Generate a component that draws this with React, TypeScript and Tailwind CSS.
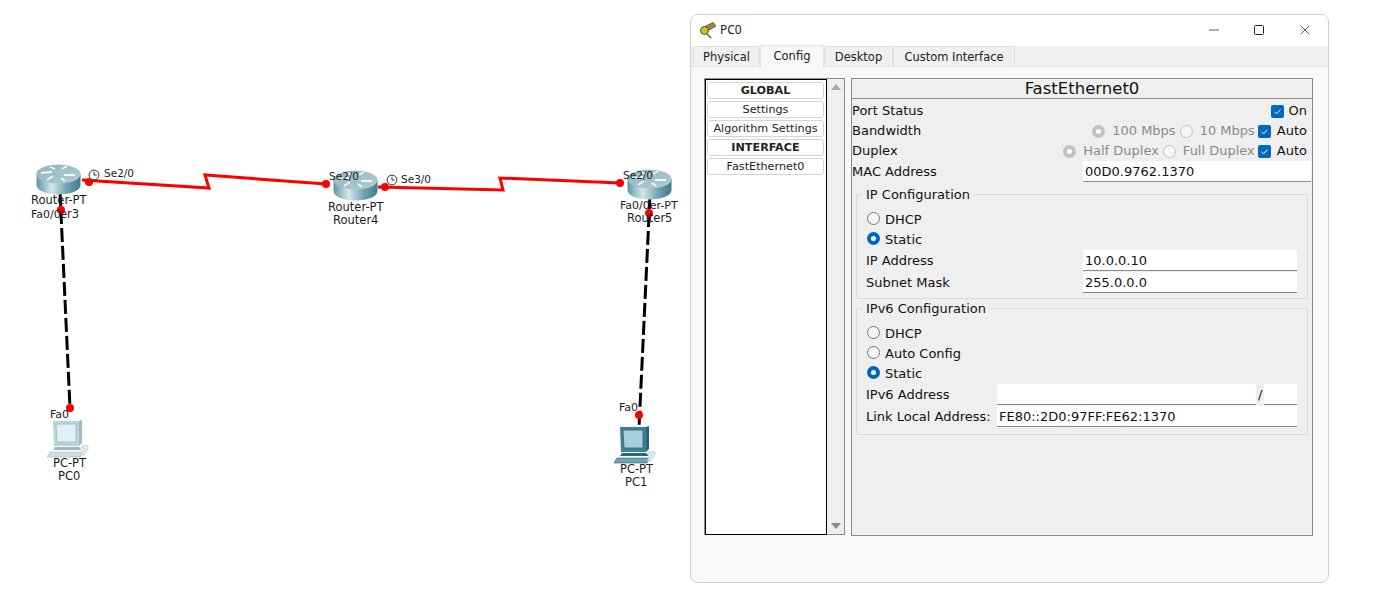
import { Minus, X } from 'lucide-react'

const font = "font-['DejaVu_Sans',sans-serif]"

function RouterIcon({ className }: { className: string }) {
  return (
    <svg viewBox="0 0 45 31" className={className}>
      <defs>
        <linearGradient id="routerSide" x1="0" x2="1" y1="0" y2="0">
          <stop offset="0" stopColor="#5d97a8" />
          <stop offset="0.35" stopColor="#d5e6ea" />
          <stop offset="0.7" stopColor="#6fa3b2" />
          <stop offset="1" stopColor="#3d7b8e" />
        </linearGradient>
        <linearGradient id="routerTop" x1="0" x2="1" y1="0" y2="1">
          <stop offset="0" stopColor="#8fb5c0" />
          <stop offset="1" stopColor="#b5ccd3" />
        </linearGradient>
      </defs>
      <path d="M0.5 10 V21 C0.5 26.5 10 30.5 22.5 30.5 S44.5 26.5 44.5 21 V10 Z" fill="url(#routerSide)" />
      <ellipse cx="22.5" cy="10" rx="22" ry="9.5" fill="url(#routerTop)" />
      <path d="M5 9 L16 8 M19 5 L14 3 M26 5 L31 2 M28 11 L39 11 M17 12 L11 16 M25 14 L29 17" stroke="#eef6f8" strokeWidth="1.8" fill="none" />
    </svg>
  )
}

function PcIcon({ className, dark }: { className: string; dark?: boolean }) {
  const body = dark ? '#3f8096' : '#b9d3db'
  const shade = dark ? '#2b6579' : '#9bbcc6'
  const screen = dark ? '#a9cdd9' : '#e2eff3'
  const base = dark ? '#6fa3b3' : '#cfe0e5'
  return (
    <svg viewBox="0 0 42 38" className={className}>
      <path d="M6 1 H32 V26 H7 Z" fill={body} />
      <path d="M32 1 L35 0 V23 L32 26 Z" fill={shade} />
      <path d="M9 4 H29 V22 H10 Z" fill={screen} stroke={shade} strokeWidth="0.8" />
      <path d="M8 27 H32 L35 30 H6 Z" fill={shade} />
      <path d="M3 32 H36 L33 37 H0 Z" fill={base} stroke={shade} strokeWidth="0.6" />
      <path d="M34 27 C38 24 42 25 41 29 L37 35 H33 L37 29 Z" fill="#dfeaed" stroke="#a8c3cb" strokeWidth="0.6" />
    </svg>
  )
}

function Clock({ className }: { className: string }) {
  return (
    <svg viewBox="0 0 12 12" className={className}>
      <circle cx="6" cy="6" r="4.9" fill="white" stroke="#333" strokeWidth="1" />
      <path d="M6 2.8 V6 H8.6" fill="none" stroke="#333" strokeWidth="1" />
    </svg>
  )
}

function Label({ className, children }: { className: string; children: string }) {
  return <span className={`absolute leading-[13px] text-[#1c1c1c] whitespace-nowrap ${className}`}>{children}</span>
}

function Radio({ checked, disabled }: { checked?: boolean; disabled?: boolean }) {
  if (checked) {
    return (
      <span className={`flex w-[13px] h-[13px] shrink-0 items-center justify-center rounded-full ${disabled ? 'bg-[#c2c2c2]' : 'bg-[#0067c0]'}`}>
        <span className="w-[5px] h-[5px] rounded-full bg-white" />
      </span>
    )
  }
  return <span className={`block w-[13px] h-[13px] shrink-0 rounded-full border bg-[#f6f6f6] ${disabled ? 'border-[#c2c2c2]' : 'border-[#757575]'}`} />
}

function Check() {
  return (
    <span className="flex w-[13px] h-[13px] shrink-0 items-center justify-center rounded-[2px] bg-[#0067c0]">
      <svg viewBox="0 0 13 13" className="w-[13px] h-[13px]">
        <path d="M3.6 6.8 L5.6 8.8 L9.4 4.6" fill="none" stroke="white" strokeWidth="1" />
      </svg>
    </span>
  )
}

function Field({ value, className }: { value?: string; className: string }) {
  return (
    <div className={`h-[21px] bg-white border-b border-[#8a8a8a] pl-[2px] text-[13px] leading-[22px] text-[#111] ${className}`}>{value}</div>
  )
}

function ListItem({ children, bold }: { children: string; bold?: boolean }) {
  return (
    <div className={`h-[17px] w-[117px] rounded-[3px] border border-[#d4d4d4] bg-white text-center text-[11.2px] leading-[15px] text-[#222] ${bold ? 'font-bold' : ''}`}>
      {children}
    </div>
  )
}

function RadioRow({ label, checked }: { label: string; checked?: boolean }) {
  return (
    <div className="ml-px flex h-5 items-center gap-[5px]">
      <span className="-mt-[2px]"><Radio checked={checked} /></span>
      <span className="mt-[2px]">{label}</span>
    </div>
  )
}

function Group({ title, className, children }: { title: string; className: string; children: React.ReactNode }) {
  return (
    <div className={`relative mx-[4px] border border-[#dcdcdc] pl-[9px] pr-[10px] ${className}`}>
      <span className="absolute left-[5px] -top-[8px] bg-[#efefef] px-[4px] text-[13px] leading-[16px]">{title}</span>
      {children}
    </div>
  )
}

function Diagram() {
  return (
    <div className="relative h-[605px] w-[690px] shrink-0 bg-white">
      <svg className="absolute left-0 top-0" width="690" height="605">
        <polyline points="82,180 209,188 205,175 326,184" fill="none" stroke="#fa0000" strokeWidth="3" />
        <polyline points="378,187 503,190 500,178 620,183" fill="none" stroke="#fa0000" strokeWidth="3" />
        <line x1="60" y1="192" x2="70" y2="408" stroke="#000" strokeWidth="3" strokeDasharray="14 4" />
        <line x1="650" y1="195" x2="639" y2="428" stroke="#000" strokeWidth="3" strokeDasharray="14 4" />
      </svg>
      <RouterIcon className="absolute left-[36px] top-[164px] w-[45px] h-[31px]" />
      <RouterIcon className="absolute left-[333px] top-[170px] w-[45px] h-[31px]" />
      <RouterIcon className="absolute left-[627px] top-[169px] w-[45px] h-[31px]" />
      <PcIcon className="absolute left-[47px] top-[420px] w-[42px] h-[38px]" />
      <PcIcon dark className="absolute left-[614px] top-[426px] w-[42px] h-[38px]" />
      <svg className="absolute left-0 top-0" width="690" height="605">
        <g fill="#fa0000">
          <circle cx="89" cy="182" r="4" />
          <circle cx="326" cy="184" r="4" />
          <circle cx="385" cy="187" r="4" />
          <circle cx="620" cy="183" r="4" />
          <circle cx="61" cy="210" r="4" />
          <circle cx="70" cy="408" r="4" />
          <circle cx="649" cy="213" r="4" />
          <circle cx="639" cy="415" r="4" />
        </g>
      </svg>
      <Clock className="absolute left-[88px] top-[169px] w-3 h-3" />
      <Clock className="absolute left-[386px] top-[174px] w-3 h-3" />
      <Label className="left-[104px] top-[167px] text-[10.5px]">Se2/0</Label>
      <Label className="left-[401px] top-[173px] text-[10.5px]">Se3/0</Label>
      <Label className="left-[329px] top-[170px] text-[10.5px]">Se2/0</Label>
      <Label className="left-[623px] top-[169px] text-[10.5px]">Se2/0</Label>
      <Label className="left-[31px] top-[194px] text-[11.5px]">Router-PT</Label>
      <Label className="left-[31px] top-[208px] text-[11px]">Fa0/0</Label>
      <Label className="left-[60px] top-[208px] text-[11.5px]">er3</Label>
      <Label className="left-[328px] top-[201px] text-[11.5px]">Router-PT</Label>
      <Label className="left-[333px] top-[214px] text-[11.5px]">Router4</Label>
      <Label className="left-[620px] top-[199px] text-[11px]">Fa0/0er-PT</Label>
      <Label className="left-[627px] top-[212px] text-[11.5px]">Router5</Label>
      <Label className="left-[50px] top-[408px] text-[11px]">Fa0</Label>
      <Label className="left-[619px] top-[401px] text-[11px]">Fa0</Label>
      <Label className="left-[53px] top-[457px] text-[11.5px]">PC-PT</Label>
      <Label className="left-[58px] top-[470px] text-[11.5px]">PC0</Label>
      <Label className="left-[620px] top-[463px] text-[11.5px]">PC-PT</Label>
      <Label className="left-[625px] top-[476px] text-[11.5px]">PC1</Label>
    </div>
  )
}

function Tab({ label, className }: { label: string; className: string }) {
  return (
    <div className={`h-[20px] border border-b-0 border-[#e2e2e2] bg-[#f0f0f0] text-center text-[11.5px] leading-[21px] text-[#222] ${className}`}>{label}</div>
  )
}

export default function App() {
  return (
    <div className={`flex h-[605px] w-[1373px] overflow-hidden bg-white text-[#111] ${font}`}>
      <Diagram />
      {/* PC0 window */}
      <div className="mt-[14px] flex h-[569px] w-[639px] flex-col rounded-[8px] border border-[#cfcfcf] bg-[#f8f8f8] overflow-hidden">
        <div className="flex h-[31px] shrink-0 items-center bg-white pb-[2px] pl-[8px]">
          <svg viewBox="0 0 18 18" className="w-[18px] h-[18px]">
            <path d="M3 7 L14 1.5 L17 5 L7 11 Z" fill="#a8843f" stroke="#5b4a22" strokeWidth="0.8" />
            <circle cx="5.5" cy="9.5" r="4" fill="#c9c22a" stroke="#333" strokeWidth="0.8" />
            <path d="M8 13 L12 17" stroke="#555" strokeWidth="1.4" />
          </svg>
          <span className="ml-[3px] font-['Noto_Sans',sans-serif] text-[12px] leading-[18px] text-[#1a1a1a]">PC0</span>
          <div className="ml-auto flex items-center">
            <Minus className="mr-[32px] h-[16px] w-[16px] text-[#222]" strokeWidth={1.1} />
            <span className="mr-[33px] block h-[10px] w-[10px] rounded-[1.5px] border border-[#222]" />
            <X className="mr-[15px] h-[16px] w-[16px] text-[#222]" strokeWidth={1.1} />
          </div>
        </div>
        <div className="flex h-[21px] shrink-0 items-end bg-[#efefef] pl-[2px] border-b border-[#e4e4e4]">
          <Tab label="Physical" className="w-[67px]" />
          <div className="h-[22px] w-[64px] -mb-px border border-b-0 border-[#e2e2e2] bg-[#f8f8f8] text-center text-[11.5px] leading-[20px] text-[#222]">Config</div>
          <Tab label="Desktop" className="w-[69px]" />
          <Tab label="Custom Interface" className="w-[122px]" />
        </div>
        <div className="flex pl-[13px] pt-[11px]">
          <div className="flex h-[457px] w-[141px] border border-[#8a8d99]">
            <div className="flex h-[456px] w-[122px] flex-col gap-[2px] border border-black bg-white pl-[1px] pt-[2px]">
              <ListItem bold>GLOBAL</ListItem>
              <ListItem>Settings</ListItem>
              <ListItem>Algorithm Settings</ListItem>
              <ListItem bold>INTERFACE</ListItem>
              <ListItem>FastEthernet0</ListItem>
            </div>
            <div className="flex flex-1 flex-col items-center justify-between bg-[#efefef] py-[5px]">
              <span className="h-0 w-0 border-x-[5px] border-b-[6px] border-x-transparent border-b-[#a8a8a8]" />
              <span className="h-0 w-0 border-x-[5px] border-t-[6px] border-x-transparent border-t-[#8c8c8c]" />
            </div>
          </div>
          <div className="ml-[6px] h-[458px] w-[462px] border border-[#8a8d99] bg-[#efefef] text-[13px] leading-5">
            <div className="h-[20px] border-b border-[#8a8d99] text-center text-[16.5px] leading-[19px]">FastEthernet0</div>
            <div className="mt-[2px] flex h-5 items-center justify-between pr-[5px]">
              <span>Port Status</span>
              <div className="flex items-center gap-[5px]"><Check /><span>On</span></div>
            </div>
            <div className="flex h-5 items-center justify-between pr-[5px]">
              <span>Bandwidth</span>
              <div className="flex items-center">
                <Radio checked disabled /><span className="ml-[7px] text-[#8a8a8a]">100 Mbps</span>
                <span className="ml-[4px]"><Radio disabled /></span><span className="ml-[7px] text-[#8a8a8a]">10 Mbps</span>
                <span className="ml-[3px]"><Check /></span><span className="ml-[6px]">Auto</span>
              </div>
            </div>
            <div className="flex h-5 items-center justify-between pr-[5px]">
              <span>Duplex</span>
              <div className="flex items-center">
                <Radio checked disabled /><span className="ml-[7px] text-[#8a8a8a]">Half Duplex</span>
                <span className="ml-[4px]"><Radio disabled /></span><span className="ml-[7px] text-[#8a8a8a]">Full Duplex</span>
                <span className="ml-[3px]"><Check /></span><span className="ml-[6px]">Auto</span>
              </div>
            </div>
            <div className="flex h-[21px] items-center">
              <span className="w-[231px]">MAC Address</span>
              <Field value="00D0.9762.1370" className="w-[228px]" />
            </div>
            <Group title="IP Configuration" className="mt-[12px] h-[105px] pt-[14px]">
              <RadioRow label="DHCP" />
              <RadioRow label="Static" checked />
              <div className="mt-px flex h-[22px] items-start">
                <span className="w-[217px] leading-[21px]">IP Address</span>
                <Field value="10.0.0.10" className="w-[214px]" />
              </div>
              <div className="flex h-[22px] items-start">
                <span className="w-[217px] leading-[21px]">Subnet Mask</span>
                <Field value="255.0.0.0" className="w-[214px]" />
              </div>
            </Group>
            <Group title="IPv6 Configuration" className="mt-[9px] h-[127px] pt-[14px]">
              <RadioRow label="DHCP" />
              <RadioRow label="Auto Config" />
              <RadioRow label="Static" checked />
              <div className="mt-px flex h-[22px] items-start">
                <span className="w-[131px] leading-[21px]">IPv6 Address</span>
                <Field className="w-[259px]" />
                <span className="w-[8px] pl-[2px] leading-[21px]">/</span>
                <Field className="w-[33px]" />
              </div>
              <div className="flex h-[22px] items-start">
                <span className="w-[131px] leading-[21px] whitespace-nowrap">Link Local Address:</span>
                <Field value="FE80::2D0:97FF:FE62:1370" className="w-[300px]" />
              </div>
            </Group>
          </div>
        </div>
      </div>
    </div>
  )
}
